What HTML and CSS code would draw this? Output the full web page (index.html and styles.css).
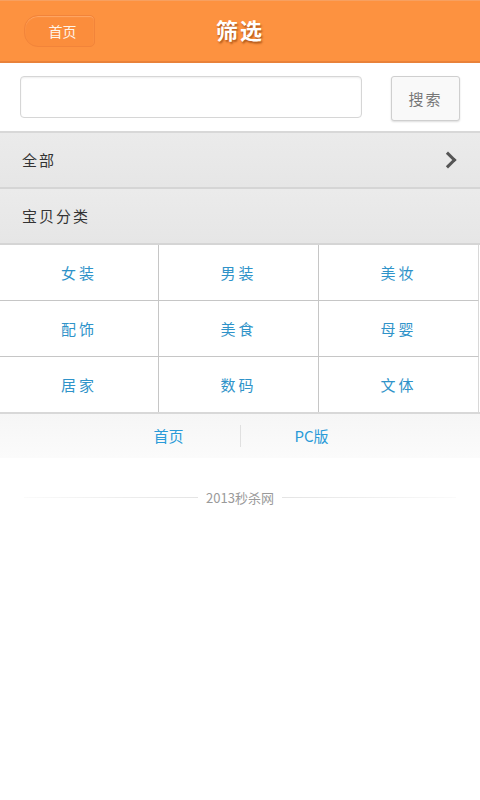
FILE: index.html
```html
<!DOCTYPE html>
<html>
<head>
    <title>筛选</title>
    <meta charset="utf-8">
    <link rel="stylesheet" href="styles.css">
</head>
<body>
    <div class="header">
        <a class="back">首页</a>
        <h1>筛选</h1>
    </div>

    <form class="search">
        <input class="keyword" type="text">
        <button class="btn" type="button">搜索</button>
    </form>

    <div class="list">
        <div class="item">全部<span class="arrow"></span></div>
        <div class="item">宝贝分类</div>
    </div>

    <ul class="cats">
        <li>女装</li>
        <li>男装</li>
        <li>美妆</li>
        <li>配饰</li>
        <li>美食</li>
        <li>母婴</li>
        <li>居家</li>
        <li>数码</li>
        <li>文体</li>
    </ul>

    <div class="nav">
        <a>首页</a>
        <a>PC版</a>
    </div>

    <div class="copy"><span>2013秒杀网</span></div>
</body>
</html>
```

FILE: styles.css
```css
body {
    margin: 0;
    background: #fff;
    font-family: "Noto Sans CJK SC", "Liberation Sans", sans-serif;
}
.header {
    height: 60px;
    box-sizing: border-box;
    padding-bottom: 4px;
    background: #fd9240;
    border-top: 1px solid #f7a060;
    border-bottom: 2px solid #e9823a;
    height: 63px;
    position: relative;
    display: flex;
    align-items: center;
    justify-content: center;
}
.header h1 {
    margin: 0;
    font-size: 22px;
    font-weight: bold;
    color: #fff;
    letter-spacing: 2px;
    text-shadow: 1px 2px 2px #b0581a;
}
.back {
    position: absolute;
    left: 24px;
    top: 14px;
    width: 71px;
    height: 32px;
    box-sizing: border-box;
    border: 1px solid #f2843a;
    border-radius: 14px 5px 5px 14px;
    background: #fb8d3c;
    box-shadow: inset 0 1px 1px #ffa866;
    color: #fff4e8;
    font-size: 14px;
    line-height: 30px;
    text-align: center;
    text-indent: 6px;
}
.search {
    margin: 0;
    height: 68px;
    display: flex;
    align-items: center;
    padding: 0 20px;
}
.keyword {
    width: 342px;
    height: 42px;
    box-sizing: border-box;
    border: 1px solid #d6d6d6;
    border-radius: 4px;
    box-shadow: inset 0 1px 2px #eee;
    margin: 0;
}
.btn {
    margin-left: auto;
    margin-top: 3px;
    width: 69px;
    height: 45px;
    border: 1px solid #cfcfcf;
    border-radius: 3px;
    background: #f9f9f9;
    box-shadow: 0 1px 2px #ddd;
    color: #777;
    font-family: inherit;
    font-size: 15px;
    letter-spacing: 2px;
}
.list {
    border-top: 2px solid #d8d8d8;
}
.item {
    height: 54px;
    line-height: 54px;
    padding-left: 22px;
    background: linear-gradient(#ebebeb, #e6e6e6);
    border-bottom: 2px solid #d5d5d5;
    font-size: 15px;
    color: #333;
    letter-spacing: 2px;
    position: relative;
}
.arrow {
    position: absolute;
    right: 26px;
    top: 21px;
    width: 9px;
    height: 9px;
    border-top: 3px solid #555;
    border-right: 3px solid #555;
    transform: rotate(45deg);
}
.cats {
    list-style: none;
    margin: 0;
    padding: 0;
    display: grid;
    grid-template-columns: 159px 160px 160px;
    border-bottom: 2px solid #d8d8d8;
}
.cats li {
    height: 55px;
    line-height: 55px;
    text-align: center;
    font-size: 15px;
    color: #2f93c9;
    letter-spacing: 3px;
    border-bottom: 1px solid #c6c6c6;
    border-right: 1px solid #c6c6c6;
}
.cats li:nth-child(3n) {
    border-right: 1px solid #d8d8d8;
}
.cats li:nth-child(n+7) {
    border-bottom: none;
}
.nav {
    height: 44px;
    display: flex;
    justify-content: center;
    align-items: center;
    background: linear-gradient(#f6f6f6, #fbfbfb);
}
.nav a {
    width: 142px;
    text-align: center;
    font-size: 15px;
    color: #2a9bd8;
    line-height: 22px;
}
.nav a + a {
    border-left: 1px solid #e0e0e0;
}
.copy {
    margin: 30px 24px 0;
    display: flex;
    align-items: center;
    font-size: 13px;
    color: #9a9a9a;
}
.copy::before, .copy::after {
    content: "";
    flex: 1;
    height: 1px;
    background: linear-gradient(to right, #fafafa, #e4e4e4);
}
.copy::after {
    background: linear-gradient(to left, #fafafa, #e4e4e4);
}
.copy span {
    padding: 0 8px;
}
```
